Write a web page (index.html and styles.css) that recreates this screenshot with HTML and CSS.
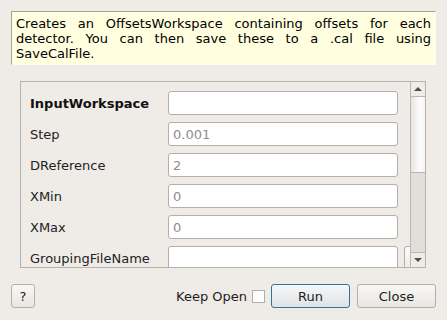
FILE: index.html
```html
<!DOCTYPE html>
<html lang="en">
  <head>
    <meta charset="UTF-8" />
    <title>CalibrateRectangularDetectors</title>
    <link rel="stylesheet" href="styles.css">
  </head>
  <body>
    <div class="dialog">
      <div class="description">
        <p class="just">Creates an OffsetsWorkspace containing offsets for each detector. You can then save these to a .cal file using</p>
        <p>SaveCalFile.</p>
      </div>

      <div class="scroll-area">
        <div class="props">
          <div class="row">
            <label class="mandatory">InputWorkspace</label>
            <input type="text" />
          </div>
          <div class="row">
            <label>Step</label>
            <input type="text" placeholder="0.001" />
          </div>
          <div class="row">
            <label>DReference</label>
            <input type="text" placeholder="2" />
          </div>
          <div class="row">
            <label>XMin</label>
            <input type="text" placeholder="0" />
          </div>
          <div class="row">
            <label>XMax</label>
            <input type="text" placeholder="0" />
          </div>
          <div class="row">
            <label>GroupingFileName</label>
            <input type="text" />
            <button class="browse" title="Browse"></button>
          </div>
        </div>
        <div class="scrollbar">
          <div class="arrow up"></div>
          <div class="handle"></div>
          <div class="track"></div>
          <div class="arrow down"></div>
        </div>
      </div>

      <div class="buttons">
        <button class="btn help">?</button>
        <span class="spacer"></span>
        <label class="keep">Keep Open <span class="check"></span></label>
        <button class="btn run">Run</button>
        <button class="btn">Close</button>
      </div>
    </div>
  </body>
</html>
```

FILE: styles.css
```css
body {
  margin: 0;
  background-color: #efebe7;
  font-family: "DejaVu Sans", sans-serif;
  font-size: 13px;
  color: #000;
}

.dialog {
  display: flex;
  flex-direction: column;
  height: 320px;
  padding: 11px 11px 12px 11px;
  box-sizing: border-box;
}

/* Description */
.description {
  height: 54px;
  box-sizing: border-box;
  background-color: #ffffdf;
  border-top: 1px solid #a5a29e;
  border-left: 1px solid #a5a29e;
  border-right: 1px solid #fbfaf9;
  border-bottom: 1px solid #fbfaf9;
  padding: 4px 4px 0 4px;
  line-height: 15px;
}

.description p {
  margin: 0;
}

.description .just {
  text-align: justify;
  text-align-last: justify;
}

/* Properties */
.scroll-area {
  display: flex;
  margin: 16px 10px 0 9px;
  height: 187px;
  box-sizing: border-box;
  border: 1px solid #b6b2ae;
  overflow: hidden;
}

.props {
  flex: 1;
  overflow: hidden;
  padding: 9px 0 0 9px;
}

.row {
  display: flex;
  align-items: center;
  height: 24px;
  margin-bottom: 7px;
  white-space: nowrap;
}

.row label {
  width: 138px;
  flex-shrink: 0;
  color: #222;
}

.row label.mandatory {
  font-weight: bold;
  color: #111;
}

.row input {
  width: 230px;
  height: 24px;
  box-sizing: border-box;
  flex-shrink: 0;
  border: 1px solid #b3afab;
  border-radius: 3px;
  background-color: #fff;
  padding: 0 4px;
  font-family: "DejaVu Sans", sans-serif;
  font-size: 13px;
}

.row input::placeholder {
  color: #8d8d8d;
}

.browse {
  margin-left: 6px;
  width: 40px;
  height: 24px;
  flex-shrink: 0;
  border: 1px solid #b3afab;
  border-radius: 3px;
  background: linear-gradient(#fbfbfa, #ecebe8);
}

.scrollbar {
  width: 14px;
  flex-shrink: 0;
  display: flex;
  flex-direction: column;
  border-left: 1px solid #bbb8b4;
}

.arrow {
  height: 14px;
  display: flex;
  align-items: center;
  justify-content: center;
  background-color: #efebe7;
}

.arrow.up {
  border-bottom: 1px solid #bbb8b4;
}

.arrow.down {
  border-top: 1px solid #bbb8b4;
}

.arrow.up::after {
  content: "";
  border-left: 4px solid transparent;
  border-right: 4px solid transparent;
  border-bottom: 4px solid #4e4e4e;
}

.arrow.down::after {
  content: "";
  border-left: 4px solid transparent;
  border-right: 4px solid transparent;
  border-top: 4px solid #4e4e4e;
}

.handle {
  height: 75px;
  background: linear-gradient(to right, #e6e4e1, #fcfcfc 60%, #f6f5f4);
  border-bottom: 1px solid #bbb8b4;
}

.track {
  flex: 1;
  background-color: #e0dfdb;
}

/* Buttons */
.buttons {
  display: flex;
  align-items: center;
  margin-top: 16px;
  height: 24px;
}

.spacer {
  flex: 1;
}

.btn {
  height: 24px;
  width: 79px;
  box-sizing: border-box;
  border: 1px solid #b3afab;
  border-radius: 3px;
  background: linear-gradient(#f8f7f6, #e8e6e3);
  font-family: "DejaVu Sans", sans-serif;
  font-size: 13px;
  color: #1e1e1e;
  padding: 0;
}

.btn.help {
  width: 24px;
}

.btn.run {
  border-color: #2f72a6;
  margin-right: 7px;
  background: linear-gradient(#f6f7f8, #dfe3e6);
}

.keep {
  display: flex;
  align-items: center;
  gap: 5px;
  margin-right: 6px;
  color: #1e1e1e;
}

.check {
  width: 13px;
  height: 13px;
  box-sizing: border-box;
  border: 1px solid #b3afab;
  background-color: #fff;
}
```
